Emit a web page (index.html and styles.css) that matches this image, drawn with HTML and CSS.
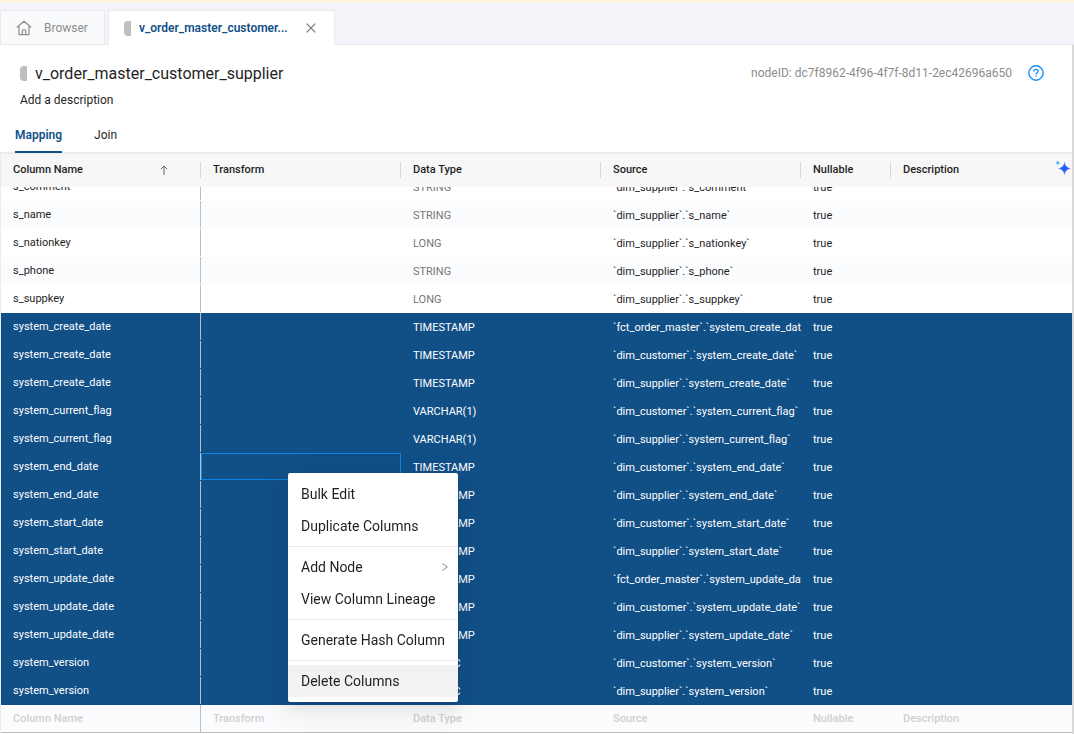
FILE: index.html
```html
<!DOCTYPE html>
<html lang="en">
<head>
    <meta charset="UTF-8">
    <meta name="viewport" content="width=device-width, initial-scale=1.0">
    <title>v_order_master_customer_supplier</title>
    <link rel="stylesheet" href="styles.css">
</head>
<body>

    <nav class="top-tabs">
        <button class="top-tab" type="button">
            <svg class="home" viewBox="0 0 16 16" width="16" height="16" fill="none" stroke="#8c8c8c" stroke-width="1.2" stroke-linejoin="round" stroke-linecap="round">
                <path d="M3 7H1.200L8 1.200 14.800 7H13M3 7v7.600h10V7M6.400 14.400V10h3.200v4.400"/>
            </svg>
            Browser
        </button>
        <div class="top-tab active">
            <span class="node-mark"></span>
            <a href="#node">v_order_master_customer...</a>
            <button class="close" type="button" aria-label="Close tab">
                <svg viewBox="0 0 10 10" width="10" height="10" stroke="#777" stroke-width="1.2"><path d="M.7.7l8.600 8.600M9.300.7.7 9.300"/></svg>
            </button>
        </div>
    </nav>

    <main class="node" id="node">
        <header class="node-head">
            <div class="title-row">
                <span class="node-mark"></span>
                <h1>v_order_master_customer_supplier</h1>
                <span class="node-id">nodeID: dc7f8962-4f96-4f7f-8d11-2ec42696a650</span>
                <button class="help" type="button" aria-label="Help">
                    <svg viewBox="0 0 16 16" width="16" height="16" fill="none" stroke="#1890ff" stroke-width="1.4">
                        <circle cx="8" cy="8" r="7.200"/>
                        <path d="M5.900 6.500c0-1.300.9-2.100 2.100-2.100s2.100.8 2.100 1.900c0 1.500-2.100 1.500-2.100 3.100M8 10.500v1.300"/>
                    </svg>
                </button>
            </div>
            <p class="description">Add a description</p>
        </header>

        <nav class="node-tabs">
            <button class="node-tab active" type="button">Mapping</button>
            <button class="node-tab" type="button">Join</button>
        </nav>

        <div class="grid" id="grid">
            <table>
                <colgroup>
                    <col class="col-wide"><col class="col-wide"><col class="col-wide"><col class="col-wide"><col class="col-narrow"><col>
                </colgroup>
                <thead>
                    <tr>
                        <th><div class="head">Column Name
                            <svg class="sort" viewBox="0 0 8 10" width="8" height="10" fill="none" stroke="#666"><path d="M4 10V1M.8 4.200 4 1l3.200 3.200"/></svg>
                        </div></th>
                        <th><div class="head">Transform</div></th>
                        <th><div class="head">Data Type</div></th>
                        <th><div class="head">Source</div></th>
                        <th><div class="head">Nullable</div></th>
                        <th><div class="head">Description
                            <svg class="sparkle" viewBox="0 0 16 16" width="16" height="16">
                                <defs>
                                    <radialGradient id="spark"><stop offset="0.3" stop-color="#1a62ff"/><stop offset="1" stop-color="#b07af0"/></radialGradient>
                                </defs>
                                <path fill="url(#spark)" d="M9.500 1.500c.9 4.500 2 5.800 6.500 7-4.500 1.200-5.600 2.500-6.500 7-.9-4.500-2-5.800-6.500-7 4.500-1.200 5.600-2.500 6.500-7z"/>
                                <path fill="#45a8f5" d="M2.800 0c.4 1.900.8 2.300 2.700 2.800-1.900.5-2.300.9-2.700 2.800C2.400 3.700 2 3.300.1 2.800 2 2.300 2.400 1.900 2.800 0z"/>
                            </svg>
                        </div></th>
                    </tr>
                </thead>
                <tbody>
                    <tr><td><div class="name">s_comment</div></td><td></td><td>STRING</td><td>`dim_supplier`.`s_comment`</td><td>true</td><td></td></tr>
                    <tr><td><div class="name">s_name</div></td><td></td><td>STRING</td><td>`dim_supplier`.`s_name`</td><td>true</td><td></td></tr>
                    <tr><td><div class="name">s_nationkey</div></td><td></td><td>LONG</td><td>`dim_supplier`.`s_nationkey`</td><td>true</td><td></td></tr>
                    <tr><td><div class="name">s_phone</div></td><td></td><td>STRING</td><td>`dim_supplier`.`s_phone`</td><td>true</td><td></td></tr>
                    <tr><td><div class="name">s_suppkey</div></td><td></td><td>LONG</td><td>`dim_supplier`.`s_suppkey`</td><td>true</td><td></td></tr>
                    <tr class="selected"><td><div class="name">system_create_date</div></td><td></td><td>TIMESTAMP</td><td>`fct_order_master`.`system_create_date`</td><td>true</td><td></td></tr>
                    <tr class="selected"><td><div class="name">system_create_date</div></td><td></td><td>TIMESTAMP</td><td>`dim_customer`.`system_create_date`</td><td>true</td><td></td></tr>
                    <tr class="selected"><td><div class="name">system_create_date</div></td><td></td><td>TIMESTAMP</td><td>`dim_supplier`.`system_create_date`</td><td>true</td><td></td></tr>
                    <tr class="selected"><td><div class="name">system_current_flag</div></td><td></td><td>VARCHAR(1)</td><td>`dim_customer`.`system_current_flag`</td><td>true</td><td></td></tr>
                    <tr class="selected"><td><div class="name">system_current_flag</div></td><td></td><td>VARCHAR(1)</td><td>`dim_supplier`.`system_current_flag`</td><td>true</td><td></td></tr>
                    <tr class="selected"><td><div class="name">system_end_date</div></td><td class="focused"><div class="focus-box"></div></td><td>TIMESTAMP</td><td>`dim_customer`.`system_end_date`</td><td>true</td><td></td></tr>
                    <tr class="selected"><td><div class="name">system_end_date</div></td><td></td><td>TIMESTAMP</td><td>`dim_supplier`.`system_end_date`</td><td>true</td><td></td></tr>
                    <tr class="selected"><td><div class="name">system_start_date</div></td><td></td><td>TIMESTAMP</td><td>`dim_customer`.`system_start_date`</td><td>true</td><td></td></tr>
                    <tr class="selected"><td><div class="name">system_start_date</div></td><td></td><td>TIMESTAMP</td><td>`dim_supplier`.`system_start_date`</td><td>true</td><td></td></tr>
                    <tr class="selected"><td><div class="name">system_update_date</div></td><td></td><td>TIMESTAMP</td><td>`fct_order_master`.`system_update_date`</td><td>true</td><td></td></tr>
                    <tr class="selected"><td><div class="name">system_update_date</div></td><td></td><td>TIMESTAMP</td><td>`dim_customer`.`system_update_date`</td><td>true</td><td></td></tr>
                    <tr class="selected"><td><div class="name">system_update_date</div></td><td></td><td>TIMESTAMP</td><td>`dim_supplier`.`system_update_date`</td><td>true</td><td></td></tr>
                    <tr class="selected"><td><div class="name">system_version</div></td><td></td><td>NUMERIC</td><td>`dim_customer`.`system_version`</td><td>true</td><td></td></tr>
                    <tr class="selected"><td><div class="name">system_version</div></td><td></td><td>NUMERIC</td><td>`dim_supplier`.`system_version`</td><td>true</td><td></td></tr>
                    <tr class="new-row"><td><div class="name">Column Name</div></td><td>Transform</td><td>Data Type</td><td>Source</td><td>Nullable</td><td>Description</td></tr>
                </tbody>
            </table>
        </div>
    </main>

    <div class="context-menu" role="menu">
        <button type="button" role="menuitem">Bulk Edit</button>
        <button type="button" role="menuitem">Duplicate Columns</button>
        <hr>
        <button type="button" role="menuitem">Add Node
            <svg viewBox="0 0 6 8" width="6" height="8" fill="none" stroke="#888"><path d="M.5.5 5.300 4 .5 7.500"/></svg>
        </button>
        <button type="button" role="menuitem">View Column Lineage</button>
        <hr>
        <button type="button" role="menuitem">Generate Hash Column</button>
        <hr>
        <button class="hover" type="button" role="menuitem">Delete Columns</button>
    </div>

    <script>
        // start at the end of the list, where new columns are added
        const grid = document.getElementById('grid');
        grid.scrollTop = grid.scrollHeight;
    </script>
</body>
</html>
```
FILE: styles.css
```css
* {
    box-sizing: border-box;
}
body {
    margin: 0;
    height: 100vh;
    display: flex;
    flex-direction: column;
    overflow: hidden;
    font-family: Roboto, "Liberation Sans", sans-serif;
    font-size: 12px;
    color: #1f1f1f;
    background-color: #fff;
}
button {
    font: inherit;
    color: inherit;
    border: 0;
    padding: 0;
    background: none;
    cursor: pointer;
}
svg {
    flex: none;
    display: block;
}

/* open tabs */
.top-tabs {
    display: flex;
    gap: 3px;
    height: 45px;
    padding-top: 8px;
    border-top: 2px solid #fff4d8;
    background-color: #f3f4f9;
    box-shadow: inset 0 -1px #e9e9ec;
}
.top-tab {
    display: flex;
    align-items: center;
    padding: 0 16px 0 15px;
    border: 1px solid #ebebee;
    background-color: #f9fafc;
    color: #8c8c8c;
}
.top-tab .home {
    margin-right: 12px;
}
.top-tab.active {
    border-bottom: 0;
    background-color: #fff;
    padding: 0 18px 0 15px;
}
.top-tab a {
    margin: 0 18px 0 8px;
    color: #114f87;
    font-weight: 600;
    text-decoration: none;
}
.node-mark {
    width: 7px;
    height: 15px;
    border-radius: 4px 0 0 4px;
    background-color: #bfbfbf;
}

/* node header */
.node {
    flex: 1;
    min-height: 0;
    display: flex;
    flex-direction: column;
    border-right: 2px solid #d9d9d9;
    padding-bottom: 1px;
}
.node-head {
    padding: 16px 28px 0 20px;
}
.title-row {
    display: flex;
    align-items: center;
    height: 24px;
}
h1 {
    flex: 1;
    margin: 0 0 0 8px;
    font-size: 16px;
    font-weight: 400;
}
.node-id {
    margin-right: 16px;
    color: #8c8c8c;
}
.description {
    margin: 5px 0 8px;
    line-height: 20px;
}
.node-tabs {
    display: flex;
    gap: 32px;
    padding-left: 15px;
    border-bottom: 2px solid #ebebeb;
}
.node-tab {
    height: 35px;
    margin-bottom: -1px;
    border-bottom: 2px solid transparent;
}
.node-tab.active {
    color: #114f87;
    font-weight: 600;
    border-bottom-color: #114f87;
}

/* column grid */
.grid {
    flex: 1;
    min-height: 0;
    overflow: auto;
    scrollbar-width: none;
    border-left: 1px solid #ebebeb;
}
table {
    width: 100%;
    table-layout: fixed;
    border-collapse: separate;
    border-spacing: 0;
    font-size: 11px;
}
.col-wide {
    width: 200px;
}
.col-narrow {
    width: 90px;
}
th {
    position: sticky;
    top: 0;
    height: 33px;
    padding: 0 0 2px;
    background-color: #f7f7f7;
    text-align: left;
    font-weight: 500;
    z-index: 1;
}
.head {
    display: flex;
    align-items: center;
    justify-content: space-between;
    height: 16px;
    padding-left: 12px;
    border-right: 1px solid #d5d7da;
}
th:last-child .head {
    border-right: 0;
}
.sort {
    margin-right: 32px;
}
.sparkle {
    margin: 0 1px 4px 0;
}
td {
    height: 28px;
    padding: 0 0 0 12px;
    overflow: hidden;
    white-space: nowrap;
    color: #1f1f1f;
}
tr:nth-child(even) {
    background-color: #fbfcfe;
}
td:first-child {
    padding: 0;
    vertical-align: top;
}
.name {
    height: 27px;
    padding-left: 12px;
    border-right: 1px solid #babfc4;
    line-height: 28px;
}
td:nth-child(3) {
    color: #777;
}
tbody tr.selected {
    background-color: #114f87;
}
tbody .selected td {
    color: #fff;
}
td.focused {
    padding: 0;
    vertical-align: top;
}
.focus-box {
    height: 27px;
    border: 1px solid #0a84e0;
}
tbody .new-row td {
    color: #d0d0d0;
    font-weight: 500;
    border-bottom: 1px solid #babfc4;
}

/* right-click menu */
.context-menu {
    position: absolute;
    left: 288px;
    top: 473px;
    z-index: 2;
    display: flex;
    flex-direction: column;
    padding: 5px 0;
    border-radius: 2px;
    background-color: #fff;
    box-shadow: 0 3px 6px -4px rgba(0, 0, 0, .12), 0 6px 16px rgba(0, 0, 0, .08), 0 9px 28px 8px rgba(0, 0, 0, .05);
    font-size: 14px;
}
.context-menu button {
    display: flex;
    align-items: center;
    justify-content: space-between;
    height: 32px;
    padding: 0 13px;
    white-space: nowrap;
}
.context-menu svg {
    margin-right: -3px;
}
.context-menu .hover {
    background-color: #f2f2f2;
}
.context-menu hr {
    width: 100%;
    height: 1px;
    margin: 4px 0;
    border: 0;
    background-color: #ebebeb;
}
```
